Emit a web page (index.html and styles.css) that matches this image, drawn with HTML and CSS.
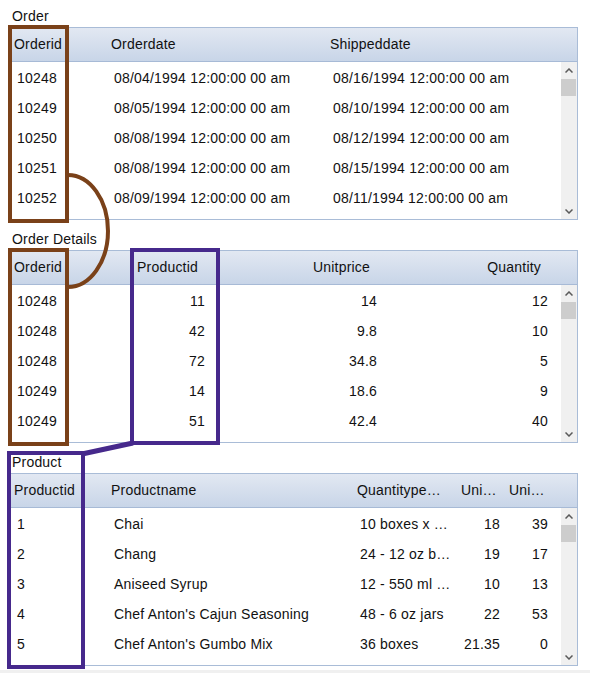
FILE: index.html
```html
<!DOCTYPE html>
<html lang="en">
<head>
<meta charset="utf-8">
<title>Master-detail grids</title>
<link rel="stylesheet" href="styles.css">
</head>
<body>
<div class="page">
  <section class="sec">
    <div class="label">Order</div>
    <div class="grid">
      <div class="head cols-order">
        <div class="hc">Orderid</div>
        <div class="hc">Orderdate</div>
        <div class="hc">Shippeddate</div>
      </div>
      <div class="body">
        <div class="rows">
          <div class="row cols-order"><span class="c">10248</span><span class="c">08/04/1994 12:00:00 00 am</span><span class="c">08/16/1994 12:00:00 00 am</span></div>
          <div class="row cols-order"><span class="c">10249</span><span class="c">08/05/1994 12:00:00 00 am</span><span class="c">08/10/1994 12:00:00 00 am</span></div>
          <div class="row cols-order"><span class="c">10250</span><span class="c">08/08/1994 12:00:00 00 am</span><span class="c">08/12/1994 12:00:00 00 am</span></div>
          <div class="row cols-order"><span class="c">10251</span><span class="c">08/08/1994 12:00:00 00 am</span><span class="c">08/15/1994 12:00:00 00 am</span></div>
          <div class="row cols-order"><span class="c">10252</span><span class="c">08/09/1994 12:00:00 00 am</span><span class="c">08/11/1994 12:00:00 00 am</span></div>
        </div>
        <div class="vscroll">
          <span class="btn"><svg width="8" height="5" viewBox="0 0 8 5"><polyline points="0.5,4.5 4,1 7.5,4.5" fill="none" stroke="#5a5a5a" stroke-width="1.5"/></svg></span>
          <span class="thumb"></span>
          <span class="btn down"><svg width="8" height="5" viewBox="0 0 8 5"><polyline points="0.5,0.5 4,4 7.5,0.5" fill="none" stroke="#5a5a5a" stroke-width="1.5"/></svg></span>
        </div>
      </div>
    </div>
  </section>

  <section class="sec">
    <div class="label">Order Details</div>
    <div class="grid">
      <div class="head cols-details">
        <div class="hc">Orderid</div>
        <div class="hc r">Productid</div>
        <div class="hc r">Unitprice</div>
        <div class="hc r">Quantity</div>
      </div>
      <div class="body">
        <div class="rows">
          <div class="row cols-details"><span class="c">10248</span><span class="c r">11</span><span class="c r">14</span><span class="c r">12</span></div>
          <div class="row cols-details"><span class="c">10248</span><span class="c r">42</span><span class="c r">9.8</span><span class="c r">10</span></div>
          <div class="row cols-details"><span class="c">10248</span><span class="c r">72</span><span class="c r">34.8</span><span class="c r">5</span></div>
          <div class="row cols-details"><span class="c">10249</span><span class="c r">14</span><span class="c r">18.6</span><span class="c r">9</span></div>
          <div class="row cols-details"><span class="c">10249</span><span class="c r">51</span><span class="c r">42.4</span><span class="c r">40</span></div>
        </div>
        <div class="vscroll">
          <span class="btn"><svg width="8" height="5" viewBox="0 0 8 5"><polyline points="0.5,4.5 4,1 7.5,4.5" fill="none" stroke="#5a5a5a" stroke-width="1.5"/></svg></span>
          <span class="thumb"></span>
          <span class="btn down"><svg width="8" height="5" viewBox="0 0 8 5"><polyline points="0.5,0.5 4,4 7.5,0.5" fill="none" stroke="#5a5a5a" stroke-width="1.5"/></svg></span>
        </div>
      </div>
    </div>
  </section>

  <section class="sec">
    <div class="label">Product</div>
    <div class="grid">
      <div class="head cols-product">
        <div class="hc">Productid</div>
        <div class="hc">Productname</div>
        <div class="hc">Quantitype…</div>
        <div class="hc">Uni…</div>
        <div class="hc">Uni…</div>
      </div>
      <div class="body">
        <div class="rows">
          <div class="row cols-product"><span class="c">1</span><span class="c">Chai</span><span class="c">10 boxes x …</span><span class="c r n4">18</span><span class="c r">39</span></div>
          <div class="row cols-product"><span class="c">2</span><span class="c">Chang</span><span class="c">24 - 12 oz b…</span><span class="c r n4">19</span><span class="c r">17</span></div>
          <div class="row cols-product"><span class="c">3</span><span class="c">Aniseed Syrup</span><span class="c">12 - 550 ml …</span><span class="c r n4">10</span><span class="c r">13</span></div>
          <div class="row cols-product"><span class="c">4</span><span class="c">Chef Anton's Cajun Seasoning</span><span class="c">48 - 6 oz jars</span><span class="c r n4">22</span><span class="c r">53</span></div>
          <div class="row cols-product"><span class="c">5</span><span class="c">Chef Anton's Gumbo Mix</span><span class="c">36 boxes</span><span class="c r n4">21.35</span><span class="c r">0</span></div>
        </div>
        <div class="vscroll">
          <span class="btn"><svg width="8" height="5" viewBox="0 0 8 5"><polyline points="0.5,4.5 4,1 7.5,4.5" fill="none" stroke="#5a5a5a" stroke-width="1.5"/></svg></span>
          <span class="thumb"></span>
          <span class="btn down"><svg width="8" height="5" viewBox="0 0 8 5"><polyline points="0.5,0.5 4,4 7.5,0.5" fill="none" stroke="#5a5a5a" stroke-width="1.5"/></svg></span>
        </div>
      </div>
    </div>
  </section>

  <svg class="annot" width="590" height="673" viewBox="0 0 590 673">
    <g fill="none" stroke="#7a4119" stroke-width="4">
      <rect x="10" y="27" width="57" height="194"/>
      <rect x="10" y="250" width="57" height="194"/>
      <path d="M68 175 A40 56 0 0 1 68 287"/>
    </g>
    <g fill="none" stroke="#46298c" stroke-width="4">
      <rect x="132" y="250" width="86" height="193"/>
      <rect x="9" y="453" width="74" height="214"/>
      <line x1="133" y1="443" x2="82" y2="454" stroke-width="5"/>
    </g>
  </svg>
</div>
</body>
</html>
```
FILE: styles.css
```css
html {
  background: #f0f0f0;
}
body {
  margin: 0;
  font-family: "Liberation Sans", Arial, sans-serif;
  font-size: 14px;
  letter-spacing: 0.2px;
  color: #111;
}
.page {
  position: relative;
  width: 590px;
  height: 670px;
  box-sizing: border-box;
  padding: 8px 12px 0 8px;
  background: #fff;
}
.sec + .sec {
  margin-top: 11px;
}
.label {
  height: 19px;
  line-height: 16px;
  padding-left: 4px;
}
.grid {
  width: 570px;
  height: 193px;
  box-sizing: border-box;
  border: 1px solid #a9bcd7;
  display: flex;
  flex-direction: column;
}
.head {
  height: 33px;
  line-height: 33px;
  border-bottom: 1px solid #a7bad6;
  background: linear-gradient(#e2e8f2, #c8d5e8);
  display: grid;
}
.hc {
  padding-left: 5px;
  white-space: nowrap;
  overflow: hidden;
}
.hc.r {
  padding-left: 0;
  padding-right: 14px;
  text-align: right;
}
.body {
  height: 157px;
  display: flex;
}
.rows {
  flex: 1;
  padding-top: 1px;
}
.row {
  height: 30px;
  line-height: 30px;
  display: grid;
}
.c {
  padding-left: 8px;
  white-space: nowrap;
  overflow: hidden;
}
.c.r {
  padding-left: 0;
  padding-right: 7px;
  text-align: right;
}
.c.r.n4 {
  padding-right: 4px;
}
.cols-order {
  grid-template-columns: 97px 219px 1fr;
}
.cols-details {
  grid-template-columns: 97px 106px 172px 171px 1fr;
}
.cols-product {
  grid-template-columns: 97px 246px 104px 48px 51px 1fr;
}
.vscroll {
  width: 16px;
  background: #f0f0f0;
  display: flex;
  flex-direction: column;
}
.btn {
  height: 16px;
  display: flex;
  align-items: center;
  justify-content: center;
}
.btn.down {
  margin-top: auto;
}
.thumb {
  height: 17px;
  width: 15px;
  margin-top: 1px;
  background: #cdcdcd;
}
.annot {
  position: absolute;
  left: 0;
  top: 0;
  pointer-events: none;
}
```
